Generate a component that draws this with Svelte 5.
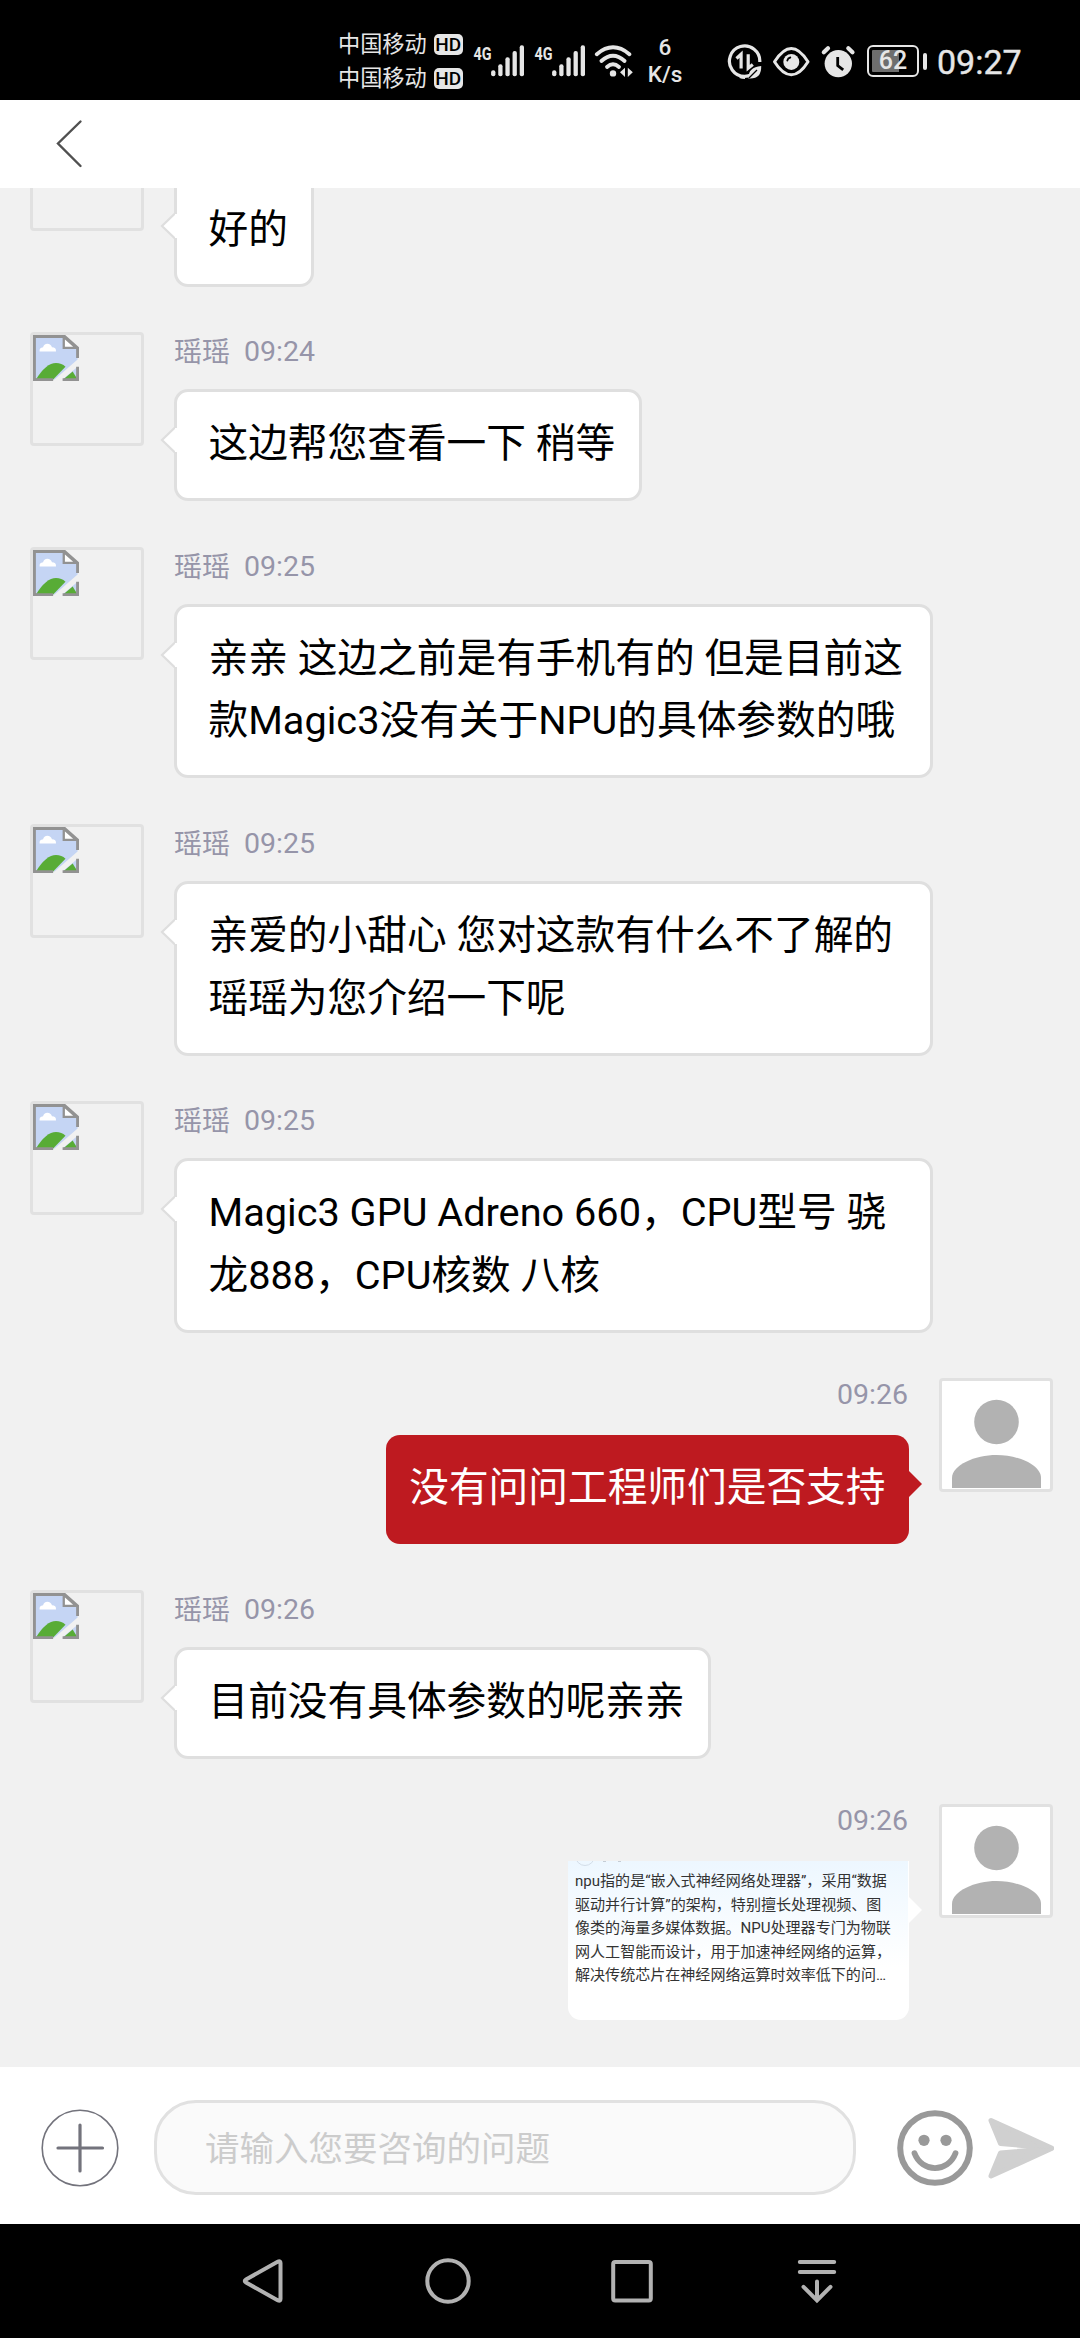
<script>
  const agent = '瑶瑶';
  const messages = [
    { from: 'agent', lines: ['好的'] },
    { from: 'agent', time: '09:24', lines: ['这边帮您查看一下 稍等'] },
    { from: 'agent', time: '09:25', lines: ['亲亲 这边之前是有手机有的 但是目前这', '款Magic3没有关于NPU的具体参数的哦'], wide: true },
    { from: 'agent', time: '09:25', lines: ['亲爱的小甜心 您对这款有什么不了解的', '瑶瑶为您介绍一下呢'], wide: true },
    { from: 'agent', time: '09:25', lines: ['Magic3 GPU Adreno 660，CPU型号 骁', '龙888，CPU核数 八核'], wide: true },
    { from: 'me', time: '09:26', lines: ['没有问问工程师们是否支持'] },
    { from: 'agent', time: '09:26', lines: ['目前没有具体参数的呢亲亲'] },
    {
      from: 'me',
      time: '09:26',
      picture: true,
      lines: [
        'npu指的是“嵌入式神经网络处理器”，采用“数据',
        '驱动并行计算”的架构，特别擅长处理视频、图',
        '像类的海量多媒体数据。NPU处理器专门为物联',
        '网人工智能而设计，用于加速神经网络的运算，',
        '解决传统芯片在神经网络运算时效率低下的问…'
      ]
    }
  ];
  const bars = [69.3, 63.3, 56.3, 50, 44.3];
</script>

<div class="screen">
  <div class="status">
    <div class="carriers">
      {#each [0, 1] as sim (sim)}
        <div class="carrier"><span>中国移动</span><span class="hd">HD</span></div>
      {/each}
    </div>
    {#each [0, 1] as sim (sim)}
      <svg class="signal" viewBox="472 40 54 40">
        <text x="473.5" y="58.5" textLength="18" lengthAdjust="spacingAndGlyphs">4G</text>
        {#each bars as top, i}
          <rect x={491.1 + i * 7.15} y={top} width="4.3" height={75.3 - top} rx="2" />
        {/each}
      </svg>
    {/each}
    <svg class="wifi" viewBox="594 40 42 40">
      <g fill="none" stroke="#e6e6e6" stroke-width="3.8" stroke-linecap="round">
        <path d="M596.8 53.2Q613 39.400 629.400 53.200" />
        <path d="M601.400 60Q613 49.400 624.600 60" />
        <path d="M607 66Q613 60.400 619 66" />
      </g>
      <circle cx="613" cy="72.400" r="3.200" />
      <path d="M620 71.300l5-4.600v9.200zM632.800 71.300l-5-4.600v9.200z" />
    </svg>
    <div class="speed"><span>6</span><span>K/s</span></div>
    <svg class="data" viewBox="726 40 40 40">
      <path d="M757 69A15.200 15.200 0 1 1 759.800 61M745 76.300q-3 0-5-.8" fill="none" stroke="#e6e6e6" stroke-width="3.200" />
      <path d="M736.500 57.500l4.600-4.300V67.500M752.800 63.500l-4.600 3.700V53.200" fill="none" stroke="#e6e6e6" stroke-width="3.200" />
      <path d="M748.500 77.500q-.500-11.500 12.700-12.500q.400 13.500-12.700 12.500z" />
      <path d="M749 77l8-8" stroke="#000" stroke-width="1.200" />
    </svg>
    <svg class="eye" viewBox="771 40 40 40">
      <path d="M774.500 60.700Q783 47.500 791.300 47.500T808 60.700Q800 73.700 791.300 73.700T774.500 60.700z" fill="none" stroke="#e6e6e6" stroke-width="3" stroke-linejoin="round" />
      <circle cx="791.300" cy="60.900" r="8" />
      <path d="M787.300 59.500a4 4 0 0 1 3-3" fill="none" stroke="#000" stroke-width="1.800" stroke-linecap="round" />
    </svg>
    <svg class="alarm" viewBox="818 40 40 40">
      <circle cx="838.300" cy="62.600" r="13.700" />
      <path d="M823.800 51.300l4.200-4.100M852.500 51.300l-4.200-4.100" stroke="#e6e6e6" stroke-width="4.200" stroke-linecap="round" />
      <path d="M837.700 56v8.500l5.500 4.300" fill="none" stroke="#000" stroke-width="2.800" />
    </svg>
    <div class="battery"><span>62</span></div>
    <div class="cap"></div>
    <div class="clock">09:27</div>
  </div>

  <header>
    <svg class="back" viewBox="0 0 28 50"><path d="M25.500 2.500L3 24.500L25.500 47" fill="none" stroke="#505050" stroke-width="2.400" stroke-linecap="round" /></svg>
  </header>

  <main>
    {#each messages as m}
      <div class="row {m.from}">
        <div class="avatar">
          {#if m.from === 'agent'}
            <svg class="broken" viewBox="0 0 16 16">
              <path d="M.5.500H11L15.500 4.500V8.500L7.500 15.500H.5z" fill="#c5d5f4" />
              <path d="M2.300 5.700q-.2-1.200 1.200-1.400q.3-1.300 1.500-1.300t1.600 1.300q1.500 0 1.400 1.400z" fill="#fff" />
              <path d="M1 15.500Q4.500 9.700 8 9.700q2 0 3.300 1.300L7 15.500z" fill="#58ac36" />
              <path d="M10.300 15.500L15.500 11v4.500z" fill="#c5d5f4" />
              <path d="M10.500 15.500l3.300-2.800l1.700 2.800z" fill="#58ac36" />
              <path d="M7 15.500H.5V.5H11L15.500 4.500V8M10.300 15.500H15.500V11" fill="none" stroke="#929292" stroke-width="1" />
              <path d="M10.700.700V4.500H15z" fill="#fff" stroke="#929292" stroke-width=".8" />
            </svg>
          {:else}
            <svg class="person" viewBox="1 1 107 107">
              <circle cx="55.500" cy="42" r="22.300" />
              <path d="M11 109V98C11 85 34 75 55.500 75S100 85 100 98V109z" />
            </svg>
          {/if}
        </div>
        <div class="body">
          <div class="meta">
            {#if m.time}
              {#if m.from === 'agent'}<span class="name">{agent}</span>{/if}
              <span>{m.time}</span>
            {/if}
          </div>
          <div class="bubble" class:wide={m.wide} class:picture={m.picture}>
            {#if m.from === 'agent'}
              <svg class="tail" viewBox="0 0 18 28"><path d="M16 0.500L2 14L16 27.500" fill="#fff" stroke="#dedede" stroke-width="2.200" /><path d="M15 2H18V26H15z" fill="#fff" /></svg>
            {:else}
              <svg class="tail" viewBox="0 0 13 28"><path d="M0 1L13 14L0 27z" /></svg>
            {/if}
            {#if m.picture}
              <div class="photo">
                <svg class="trace" viewBox="0 0 60 8"><circle cx="17" cy="-5" r="9.500" fill="none" stroke="#d3dde8" /><path d="M35 0h3M50 0h3" stroke="#b8c0c8" stroke-width="1.500" /></svg>
                {#each m.lines as line}<p>{line}</p>{/each}
              </div>
            {:else}
              {#each m.lines as line}<p>{line}</p>{/each}
            {/if}
          </div>
        </div>
      </div>
    {/each}
  </main>

  <footer>
    <svg class="plus" viewBox="0 0 78 80" fill="none" stroke="#73737c">
      <ellipse cx="39" cy="40" rx="37.800" ry="37.700" stroke-width="1.600" />
      <path d="M39 17V63M17 40H61.500" stroke-width="3.200" stroke-linecap="round" />
    </svg>
    <div class="input">请输入您要咨询的问题</div>
    <svg class="smile" viewBox="0 0 78 78">
      <circle cx="39" cy="39" r="34.800" fill="none" stroke="#999" stroke-width="6" />
      <circle cx="28" cy="31.300" r="5.600" /><circle cx="50" cy="31.300" r="5.600" />
      <path d="M18.500 44.200C26 64 52 64 59.500 44.200" fill="none" stroke="#999" stroke-width="5.800" stroke-linecap="round" />
    </svg>
    <svg class="send" viewBox="0 0 68 64">
      <path d="M4 4.500L64.500 32L13.500 27.500z" />
      <path d="M4 60L64.500 32.500L13.500 37z" />
      <path class="tip" d="M46 31L64 32L46 33.500z" />
    </svg>
  </footer>

  <nav>
    <svg viewBox="0 0 50 50"><path d="M40 5.500Q42.500 4.500 42.500 7V43Q42.500 45.500 40 44.500L8 26.500Q5.500 25 8 23.500z" /></svg>
    <svg viewBox="0 0 50 50"><circle cx="25" cy="25" r="20.700" /></svg>
    <svg viewBox="0 0 50 50"><rect x="6.200" y="6" width="37.600" height="38.600" rx="2" /></svg>
    <svg viewBox="0 0 50 50"><path d="M7.800 6H42.200M7.800 16H42.200M25 25.500V44M11.500 30.800L25 44.300L38.500 30.800" stroke-linecap="round" /></svg>
  </nav>
</div>

<style>
  :global(body) { background: #000; }
  .screen {
    width: 1080px;
    height: 2338px;
    display: flex;
    flex-direction: column;
    overflow: hidden;
    background: #f1f1f1;
    font-family: Roboto, "Noto Sans CJK SC", sans-serif;
  }
  p { margin: 0; white-space: pre; }
  svg { display: block; flex: none; }

  .status {
    height: 100px;
    box-sizing: border-box;
    flex: none;
    padding: 22px 0 0 338px;
    display: flex;
    align-items: center;
    background: #000;
    color: #e6e6e6;
    fill: #e6e6e6;
  }
  .carriers { width: 134px; display: flex; flex-direction: column; }
  .carrier { height: 34px; display: flex; align-items: center; gap: 7px; font-size: 22.200px; line-height: 34px; }
  .hd {
    width: 29px;
    height: 21px;
    border-radius: 5px;
    background: #e6e6e6;
    color: #000;
    font-size: 19px;
    font-weight: 500;
    line-height: 21px;
    text-align: center;
  }
  .status svg { height: 40px; margin-top: -1px; }
  .signal { width: 54px; margin-right: 7px; }
  .signal text { font-size: 19px; font-weight: 700; }
  .wifi { width: 42px; }
  .speed {
    width: 58px;
    margin: -1px 0 0 0;
    display: flex;
    flex-direction: column;
    align-items: center;
    font-size: 22.500px;
    font-weight: 500;
    line-height: 27px;
  }
  .data { width: 40px; margin-left: 32px; }
  .eye { width: 40px; margin-left: 5px; }
  .alarm { width: 40px; margin-left: 7px; }
  .battery {
    width: 52px;
    height: 32px;
    box-sizing: border-box;
    margin: 0 0 0 9px;
    border: 2.500px solid #e6e6e6;
    border-radius: 6px;
    padding: 3px;
    background: linear-gradient(90deg, #6e6e6e 65%, #000 65%) content-box;
    font-size: 25px;
    font-weight: 500;
    line-height: 22px;
    text-align: center;
  }
  .cap { width: 4px; height: 17px; margin: 0 10px 0 4px; border-radius: 2px; background: #e6e6e6; }
  .clock { margin-top: 1px; font-size: 34px; line-height: 40px; -webkit-text-stroke: 0.4px #e6e6e6; }

  header { height: 88px; flex: none; background: #fff; display: flex; padding: 18.500px 0 0 55px; box-sizing: border-box; }
  .back { width: 28px; height: 50px; }

  main { height: 1879px; flex: none; overflow: hidden; display: flex; flex-direction: column; }
  .row { display: flex; flex: none; gap: 30px; padding: 0 27.500px 45.700px 30px; }
  .row:first-child { margin-top: -70.500px; }
  .row.me { flex-direction: row-reverse; gap: 30px; }
  .avatar {
    width: 113.500px;
    height: 113.500px;
    box-sizing: border-box;
    flex: none;
    border: 3px solid #e1e1e1;
    border-radius: 4px;
  }
  .me .avatar { background: #fff; fill: #b2b2b2; }
  .broken { width: 46px; height: 46px; }
  .person { width: 107px; height: 107px; }
  .body { display: flex; flex-direction: column; align-items: flex-start; }
  .me .body { align-items: flex-end; }
  .meta {
    height: 57px;
    box-sizing: border-box;
    padding-top: 3px;
    display: flex;
    gap: 14px;
    color: #9695a9;
    font-size: 28.500px;
    line-height: 34px;
  }
  .agent .meta { padding-left: 0.500px; }
  .name { padding-top: 1px; font-size: 28px; }
  .me .meta { padding: 0 1px 0 0; }
  .bubble {
    position: relative;
    box-sizing: border-box;
    border: 3px solid #dfdfdf;
    border-radius: 14px;
    padding: 21px 23.500px 22.500px 32px;
    background: #fff;
    color: #000;
    font-size: 39.700px;
    line-height: 62.500px;
  }
  .bubble.wide { width: 759.500px; }
  .tail { position: absolute; left: -17px; top: 34px; width: 18px; height: 28px; }
  .me .bubble { border: 0; padding: 22px 23.500px 24px 23px; background: #be1a20; color: #fff; }
  .me .tail { left: auto; right: -12.500px; top: 34.500px; width: 13px; fill: #be1a20; }
  .me .bubble.picture { width: 341px; height: 159px; padding: 0; border-radius: 0 0 13px 13px; background: #fff; }
  .me .picture .tail { fill: #fff; }
  .photo {
    position: relative;
    width: 340px;
    height: 141px;
    box-sizing: border-box;
    padding: 9px 0 0 7px;
    background: linear-gradient(#edf7ff, #fff 75%);
    color: #333;
    font-size: 15.050px;
    line-height: 23.500px;
  }
  .trace { position: absolute; left: 0; top: 0; width: 60px; height: 8px; }

  footer {
    height: 157px;
    box-sizing: border-box;
    flex: none;
    display: flex;
    align-items: center;
    padding: 4px 0 0 40.500px;
    background: #fff;
  }
  .plus { width: 78px; height: 80px; }
  .input {
    width: 702.500px;
    height: 94.500px;
    box-sizing: border-box;
    margin: 0 39.500px 0 35px;
    border: 3px solid #e1e1e1;
    border-radius: 42px;
    padding-left: 48.500px;
    background: #fafafa;
    color: #ccc;
    font-size: 34.500px;
    line-height: 92px;
  }
  .smile { width: 78px; height: 78px; fill: #999; }
  .send { width: 68px; height: 64px; margin-left: 13.500px; fill: #d0d0d0; stroke: #d0d0d0; stroke-width: 5px; stroke-linejoin: round; }
  .tip { stroke-width: 1px; }

  nav { flex: 1; display: flex; gap: 134.500px; padding: 32px 0 0 238px; background: #000; }
  nav svg { width: 50px; height: 50px; fill: none; stroke: #b2b2b2; stroke-width: 4px; }
</style>
